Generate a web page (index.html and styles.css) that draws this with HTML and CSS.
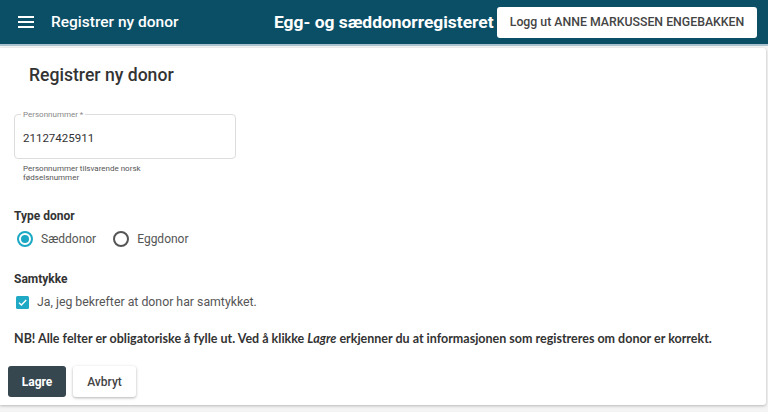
FILE: index.html
```html
<!DOCTYPE html>
<html>
<head>
    <meta charset="utf-8" />
    <title>Registrer ny donor</title>
    <link rel="stylesheet" href="styles.css">
</head>
<body>
    <header class="topbar">
        <div class="topbar-left">
            <svg class="meny" width="16" height="12" viewBox="0 0 16 12"><rect y="0" width="16" height="2" fill="#fff"/><rect y="5" width="16" height="2" fill="#fff"/><rect y="10" width="16" height="2" fill="#fff"/></svg>
            <span class="sidetittel">Registrer ny donor</span>
        </div>
        <span class="appnavn">Egg- og sæddonorregisteret</span>
        <button class="loggut" type="button">Logg ut ANNE MARKUSSEN ENGEBAKKEN</button>
    </header>

    <main class="kort">
        <h1 class="tittel">Registrer ny donor</h1>

        <div class="felt">
            <fieldset class="ramme">
                <legend>Personnummer *</legend>
                <span class="verdi">21127425911</span>
            </fieldset>
            <div class="hjelp">Personnummer tilsvarende norsk<br>fødselsnummer</div>
        </div>

        <div class="gruppe">
            <div class="etikett">Type donor</div>
            <div class="radioer">
                <label class="radio"><span class="sirkel valgt"></span>Sæddonor</label>
                <label class="radio"><span class="sirkel"></span>Eggdonor</label>
            </div>
        </div>

        <div class="gruppe samtykke">
            <div class="etikett">Samtykke</div>
            <label class="avkryss">
                <svg width="13" height="13" viewBox="0 0 13 13"><rect width="13" height="13" rx="1.5" fill="#20a9c4"/><path d="M3 6.8 L5.4 9.1 L10.2 4" stroke="#fff" stroke-width="1.4" fill="none"/></svg>
                Ja, jeg bekrefter at donor har samtykket.
            </label>
        </div>

        <p class="nb">NB! Alle felter er obligatoriske å fylle ut. Ved å klikke <i>Lagre</i> erkjenner du at informasjonen som registreres om donor er korrekt.</p>

        <div class="knapper">
            <button class="lagre" type="button">Lagre</button>
            <button class="avbryt" type="button">Avbryt</button>
        </div>
    </main>
</body>
</html>
```

FILE: styles.css
```css
* {
    font-family: Roboto, sans-serif;
    box-sizing: border-box;
}

body {
    margin: 0;
    background-color: #f4f4f4;
    height: 412px;
    overflow: hidden;
}

.topbar {
    height: 46px;
    background-color: #0b4f67;
    border-bottom: 2px solid #a9c4cf;
    display: flex;
    align-items: center;
    padding: 0 11px 0 18px;
}

.topbar-left {
    display: flex;
    align-items: center;
    gap: 17px;
    width: 256px;
}

.sidetittel {
    color: white;
    font-size: 15.5px;
    font-weight: 500;
}

.appnavn {
    color: white;
    font-size: 17.4px;
    font-weight: bold;
}

.loggut {
    margin-left: auto;
    height: 31px;
    width: 260px;
    background-color: white;
    border: none;
    border-radius: 3px;
    color: #444;
    font-size: 12.3px;
    font-weight: 500;
    padding: 0;
}

.kort {
    background-color: white;
    margin: 2px 2px 0 0;
    height: 357px;
    border-radius: 0 3px 3px 0;
    box-shadow: 0 1px 3px rgba(0, 0, 0, 0.25);
    padding: 14px 14px 0 14px;
}

.tittel {
    margin: 0 0 0 15px;
    font-size: 17.6px;
    font-weight: 500;
    color: #333;
    height: 29px;
    line-height: 27px;
}

.felt {
    margin-top: 19px;
    width: 222px;
}

.ramme {
    margin: 0;
    height: 49px;
    border: 1px solid #ddd;
    border-radius: 4px;
    padding: 0 8px;
    display: flex;
    align-items: center;
}

.ramme legend {
    font-size: 8px;
    color: #888;
    padding: 0 2px;
    margin-left: -2px;
}

.verdi {
    font-size: 11.5px;
    color: #333;
    margin-top: -1px;
}

.hjelp {
    font-size: 8px;
    line-height: 9px;
    color: #555;
    margin: 5px 0 0 9px;
}

.gruppe {
    margin-top: 27px;
}

.gruppe.samtykke {
    margin-top: 22px;
}

.etikett {
    font-size: 12px;
    font-weight: bold;
    color: #333;
    margin-bottom: 5px;
}

.radioer {
    display: flex;
    gap: 14px;
}

.radio {
    display: flex;
    align-items: center;
    gap: 8px;
    font-size: 12px;
    color: #555;
    padding-left: 3px;
    height: 22px;
}

.sirkel {
    width: 16px;
    height: 16px;
    border: 2px solid #555;
    border-radius: 50%;
    position: relative;
}

.sirkel.valgt {
    border-color: #1aa8c4;
}

.sirkel.valgt::after {
    content: "";
    position: absolute;
    left: 2px;
    top: 2px;
    width: 8px;
    height: 8px;
    border-radius: 50%;
    background-color: #1aa8c4;
}

.avkryss {
    display: flex;
    align-items: center;
    gap: 8px;
    font-size: 12.3px;
    color: #555;
    padding-left: 2px;
    margin-top: 9px;
}

.nb {
    margin: 22px 0 0 0;
    font-family: Lato, sans-serif;
    font-weight: bold;
    font-size: 12.5px;
    color: #333;
}

.nb i {
    font-family: Lato, sans-serif;
}

.knapper {
    display: flex;
    gap: 7px;
    margin: 20px 0 0 -6px;
}

.knapper button {
    height: 31px;
    border: none;
    border-radius: 3px;
    font-size: 12px;
    font-weight: bold;
}

.lagre {
    width: 58px;
    background-color: #37474f;
    color: white;
}

.avbryt {
    width: 63px;
    background-color: white;
    color: #444;
    font-weight: 500 !important;
    box-shadow: 0 1px 3px rgba(0, 0, 0, 0.3);
}
```
